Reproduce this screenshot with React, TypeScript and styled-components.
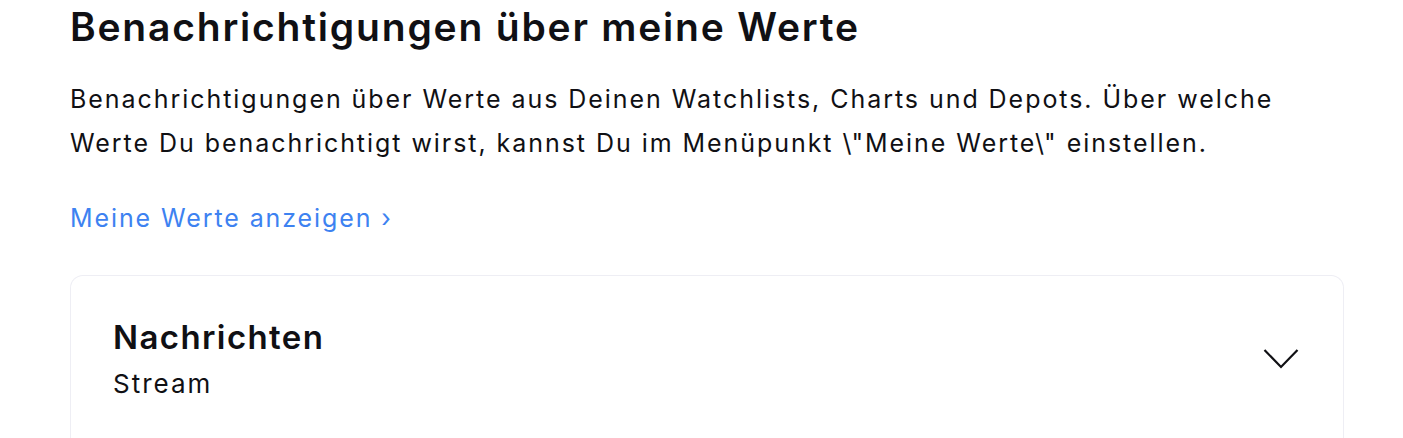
import React from "react"
import styled, { createGlobalStyle } from "styled-components"

const GlobalStyle = createGlobalStyle`
  html, body {
    margin: 0;
    padding: 0;
    background: #ffffff;
  }
  body {
    font-family: Inter, "Noto Sans", "Liberation Sans", sans-serif;
    color: #101014;
  }
`

const Page = styled.div`
  padding: 3px 59px 0 70px;
`

const Title = styled.h1`
  margin: 0;
  font-size: 39px;
  line-height: 48px;
  font-weight: 600;
  letter-spacing: 1.8px;
`

const Description = styled.p`
  margin: 26px 0 0;
  font-size: 25px;
  line-height: 44px;
  font-weight: 400;
  letter-spacing: 1.95px;
`

const LinkRow = styled.div`
  margin-top: 36px;
  line-height: 34px;
`

const MoreLink = styled.a`
  font-size: 25px;
  letter-spacing: 1.9px;
  color: #3d82f1;
  text-decoration: none;
  cursor: pointer;
`

const Card = styled.section`
  margin-top: 37px;
  border: 1.5px solid #eeeef4;
  border-bottom: none;
  border-radius: 13px 13px 0 0;
  padding: 40px 44px 40px 42px;
  display: flex;
  align-items: center;
  justify-content: space-between;
`

const CardText = styled.div`
  display: flex;
  flex-direction: column;
  gap: 9px;
`

const CardTitle = styled.h2`
  margin: 0;
  font-size: 33px;
  line-height: 42px;
  font-weight: 600;
  letter-spacing: 1.4px;
`

const CardSubtitle = styled.span`
  font-size: 26px;
  line-height: 34px;
  letter-spacing: 2px;
`

const ToggleButton = styled.button`
  border: none;
  background: none;
  padding: 0;
  display: flex;
  color: #101014;
  cursor: pointer;
`

const Chevron = () => (
  <svg width="36" height="22" viewBox="0 0 36 22" fill="none">
    <path d="M1.5 2 L18 19 L34.5 2" stroke="currentColor" strokeWidth="2.2" />
  </svg>
)

export default function App() {
  return (
    <>
      <GlobalStyle />
      <Page>
        <Title>Benachrichtigungen über meine Werte</Title>
        <Description>
          Benachrichtigungen über Werte aus Deinen Watchlists, Charts und Depots. Über welche Werte Du
          benachrichtigt wirst, kannst Du im Menüpunkt \"Meine Werte\" einstellen.
        </Description>
        <LinkRow>
          <MoreLink>Meine Werte anzeigen ›</MoreLink>
        </LinkRow>
        <Card>
          <CardText>
            <CardTitle>Nachrichten</CardTitle>
            <CardSubtitle>Stream</CardSubtitle>
          </CardText>
          <ToggleButton aria-label="Aufklappen">
            <Chevron />
          </ToggleButton>
        </Card>
      </Page>
    </>
  )
}
